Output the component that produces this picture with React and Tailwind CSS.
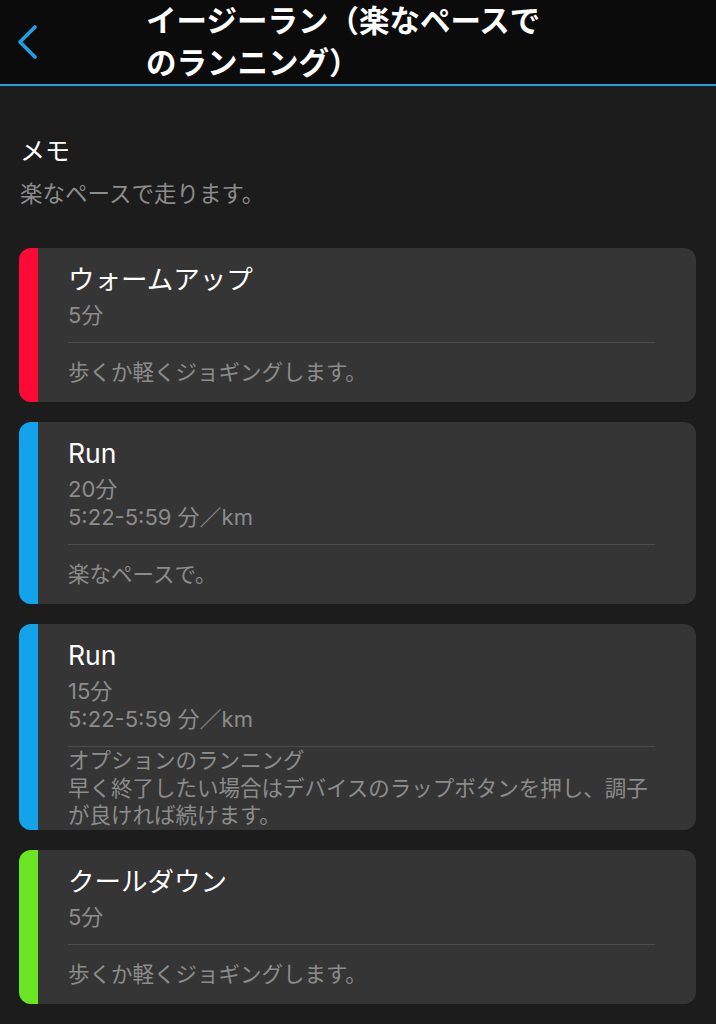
import React from "react";

const font = { fontFamily: '"Inter", "Noto Sans CJK JP", sans-serif' };

const steps = [
    {
        color: "bg-[#ff0a37]",
        title: "ウォームアップ",
        lines: ["5分"],
        note: ["歩くか軽くジョギングします。"],
    },
    {
        color: "bg-[#12a3ea]",
        title: "Run",
        lines: ["20分", "5:22-5:59 分／km"],
        note: ["楽なペースで。"],
    },
    {
        color: "bg-[#12a3ea]",
        title: "Run",
        lines: ["15分", "5:22-5:59 分／km"],
        note: ["オプションのランニング", "早く終了したい場合はデバイスのラップボタンを押し、調子が良ければ続けます。"],
    },
    {
        color: "bg-[#6ae524]",
        title: "クールダウン",
        lines: ["5分"],
        note: ["歩くか軽くジョギングします。"],
    },
];

function StepCard({ step }) {
    return (
        <div className="flex overflow-hidden rounded-xl bg-[#353535]">
            {/* Colour bar */}
            <div className={`w-[19px] shrink-0 ${step.color}`} />

            <div className="flex-1 pl-[30px] pr-[41px]">
                <div className="pt-[13px] pb-[13px]">
                    <h3 className="text-[26.5px] leading-[36px] text-white">{step.title}</h3>
                    <div className="mt-[4px]">
                        {step.lines.map((line, i) => (
                            <p key={i} className="text-[22px] leading-[28px] text-[#8c8c8c]">
                                {line}
                            </p>
                        ))}
                    </div>
                </div>
                <div className="h-px bg-[#4b4b4b]" />
                <div className="flex min-h-[59px] flex-col justify-center">
                    {step.note.map((line, i) => (
                        <p key={i} className="text-[21.5px] leading-[27.7px] text-[#8c8c8c]">
                            {line}
                        </p>
                    ))}
                </div>
            </div>
        </div>
    );
}

export default function App() {
    return (
        <div className="min-h-[1024px] w-[716px] bg-[#1c1c1c]" style={font}>
            {/* Header */}
            <header className="flex h-[84px] items-center bg-[#0b0b0b]">
                <div className="flex w-[146px] shrink-0 items-center pl-[16px]">
                    <svg width="24" height="40" viewBox="0 0 24 40" fill="none">
                        <path
                            d="M19 5 L4 20 L19 35"
                            stroke="#1ea1e8"
                            strokeWidth="3.6"
                            strokeLinecap="round"
                            strokeLinejoin="round"
                        />
                    </svg>
                </div>
                <h1 className="w-[405px] text-[30.5px] font-bold leading-[42px] text-white">
                    イージーラン（楽なペースでのランニング）
                </h1>
            </header>
            <div className="h-[2px] bg-[#1e9fe3]" />

            {/* Memo */}
            <section className="px-5 pt-[48px]">
                <h2 className="text-[25px] leading-[34px] text-white">メモ</h2>
                <p className="mt-[10px] text-[22.5px] leading-[32px] text-[#8c8c8c]">楽なペースで走ります。</p>
            </section>

            {/* Steps */}
            <div className="mt-[38px] flex flex-col gap-5 pl-[19px] pr-[20px]">
                {steps.map((step, i) => (
                    <StepCard key={i} step={step} />
                ))}
            </div>
        </div>
    );
}
